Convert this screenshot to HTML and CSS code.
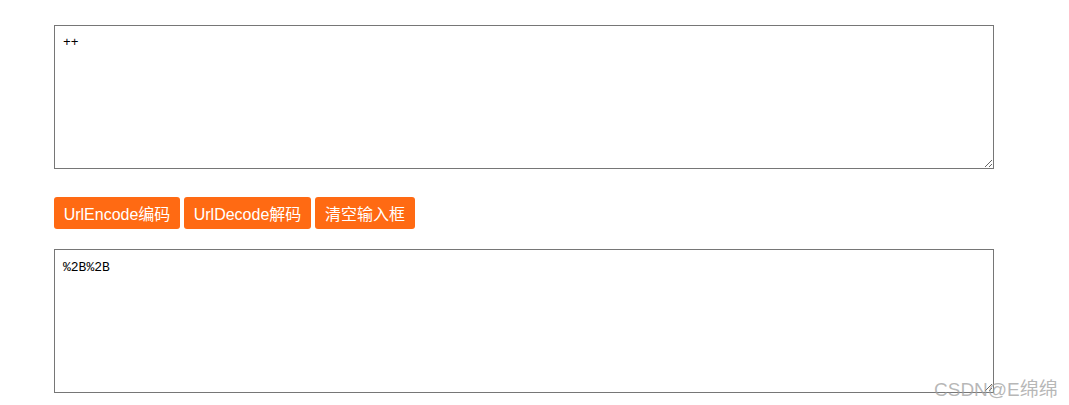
FILE: index.html
```html
<!DOCTYPE html>
<html>
<head>
<meta charset="utf-8">
<link rel="stylesheet" href="styles.css">
</head>
<body>
<div class="page">
  <textarea class="box">++</textarea>
  <div class="actions">
    <button class="btn btn-enc">UrlEncode编码</button>
    <button class="btn btn-dec">UrlDecode解码</button>
    <button class="btn btn-clr">清空输入框</button>
  </div>
  <textarea class="box box-out">%2B%2B</textarea>
</div>
<div class="watermark">CSDN@E绵绵</div>
</body>
</html>
```
FILE: styles.css
```css
html, body {
  margin: 0;
  padding: 0;
  background: #fff;
}
.page {
  padding: 25px 0 0 54px;
  display: flex;
  flex-direction: column;
  align-items: flex-start;
}
.box {
  box-sizing: border-box;
  width: 940px;
  height: 144px;
  margin: 0;
  border: 1px solid #767676;
  border-radius: 0;
  padding: 9px 8px;
  font-family: "Liberation Mono", "DejaVu Sans Mono", monospace;
  font-size: 13px;
  line-height: 16px;
  color: #000;
  resize: both;
  outline: none;
}
.box-out {
  padding-top: 10px;
}
.actions {
  display: flex;
  gap: 4px;
  margin: 28px 0 20px 0;
}
.btn {
  height: 32px;
  box-sizing: border-box;
  border: none;
  border-radius: 3px;
  background: #ff6a13;
  color: #fff;
  font-family: "Liberation Sans", "Noto Sans CJK SC", sans-serif;
  font-size: 16px;
  padding: 0;
  margin: 0;
}
.btn-enc { width: 126px; }
.btn-dec { width: 127px; }
.btn-clr { width: 100px; }
.watermark {
  position: absolute;
  left: 934px;
  top: 374px;
  font-family: "Liberation Sans", "Noto Sans CJK SC", sans-serif;
  font-size: 19px;
  color: rgba(160,160,160,0.75);
  pointer-events: none;
}
```
